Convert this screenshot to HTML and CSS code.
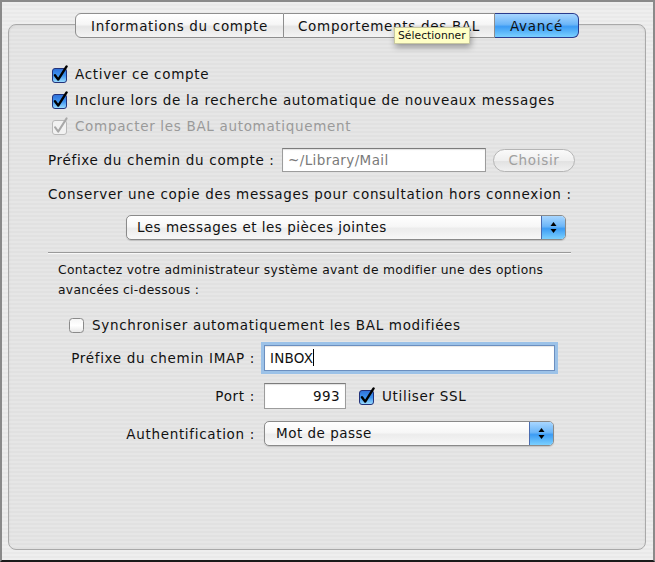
FILE: index.html
```html
<!DOCTYPE html>
<html lang="fr">
<head>
<meta charset="utf-8">
<title>Avancé</title>
<link rel="stylesheet" href="styles.css">
</head>
<body>
<div class="window">
  <div class="tabbox">
    <div class="tabs">
      <div class="tab tab-first">Informations du compte</div>
      <div class="tab tab-mid">Comportements des BAL</div>
      <div class="tab tab-sel">Avancé</div>
    </div>
    <div class="pane">
      <div class="check-row row1">
        <svg class="cb" width="18" height="18" viewBox="0 0 18 18"><defs><linearGradient id="bl" x1="0" y1="0" x2="0" y2="1"><stop offset="0" stop-color="#2f6fd8"/><stop offset="0.5" stop-color="#3d93f0"/><stop offset="1" stop-color="#9fe0ff"/></linearGradient></defs><rect x="1.5" y="3.5" width="14" height="14" rx="2.5" fill="url(#bl)" stroke="#23327a"/><path d="M4 10.2 L7.2 14.6 L15.6 1.4" fill="none" stroke="#000" stroke-width="2.4" stroke-linecap="round" stroke-linejoin="round"/></svg>
        <span>Activer ce compte</span>
      </div>
      <div class="check-row">
        <svg class="cb" width="18" height="18" viewBox="0 0 18 18"><rect x="1.5" y="3.5" width="14" height="14" rx="2.5" fill="url(#bl)" stroke="#23327a"/><path d="M4 10.2 L7.2 14.6 L15.6 1.4" fill="none" stroke="#000" stroke-width="2.4" stroke-linecap="round" stroke-linejoin="round"/></svg>
        <span>Inclure lors de la recherche automatique de nouveaux messages</span>
      </div>
      <div class="check-row disabled">
        <svg class="cb" width="18" height="18" viewBox="0 0 18 18"><rect x="1.5" y="3.5" width="14" height="14" rx="2.5" fill="#f2f2f2" stroke="#b9b9b9"/><path d="M4 10.2 L7.2 14.6 L15.6 1.4" fill="none" stroke="#a8a8a8" stroke-width="2" stroke-linecap="round" stroke-linejoin="round"/></svg>
        <span>Compacter les BAL automatiquement</span>
      </div>
      <div class="path-row">
        <span class="label">Préfixe du chemin du compte :</span>
        <div class="field field-path">~/Library/Mail</div>
        <div class="pill">Choisir</div>
      </div>
      <div class="keep-label">Conserver une copie des messages pour consultation hors connexion :</div>
      <div class="popup popup-keep">
        <span class="popup-text">Les messages et les pièces jointes</span>
        <span class="popup-arrows"><svg width="9" height="13" viewBox="0 0 9 13"><path d="M4.5 1 L7.5 5 L1.5 5 Z M4.5 12 L7.5 8 L1.5 8 Z" fill="#000"/></svg></span>
      </div>
      <div class="sep"></div>
      <p class="note">Contactez votre administrateur système avant de modifier une des options avancées ci-dessous :</p>
      <div class="check-row sync">
        <svg class="cb" width="18" height="18" viewBox="0 0 18 18"><defs><linearGradient id="wh" x1="0" y1="0" x2="0" y2="1"><stop offset="0" stop-color="#f4f4f4"/><stop offset="0.5" stop-color="#ffffff"/><stop offset="1" stop-color="#e6e6e6"/></linearGradient></defs><rect x="1.5" y="2.5" width="14" height="14" rx="3" fill="url(#wh)" stroke="#8a8a8a"/></svg>
        <span>Synchroniser automatiquement les BAL modifiées</span>
      </div>
      <div class="form">
        <span class="flabel">Préfixe du chemin IMAP :</span>
        <div class="field field-imap">INBOX<span class="caret"></span></div>
        <span class="flabel">Port :</span>
        <div class="port-line">
          <div class="field field-port">993</div>
          <svg class="cb" width="18" height="18" viewBox="0 0 18 18"><rect x="1.5" y="3.5" width="14" height="14" rx="2.5" fill="url(#bl)" stroke="#23327a"/><path d="M4 10.2 L7.2 14.6 L15.6 1.4" fill="none" stroke="#000" stroke-width="2.4" stroke-linecap="round" stroke-linejoin="round"/></svg>
          <span>Utiliser SSL</span>
        </div>
        <span class="flabel">Authentification :</span>
        <div class="popup popup-auth">
          <span class="popup-text">Mot de passe</span>
          <span class="popup-arrows"><svg width="9" height="13" viewBox="0 0 9 13"><path d="M4.5 1 L7.5 5 L1.5 5 Z M4.5 12 L7.5 8 L1.5 8 Z" fill="#000"/></svg></span>
        </div>
      </div>
    </div>
  </div>
  <div class="tooltip">Sélectionner</div>
</div>
</body>
</html>
```

FILE: styles.css
```css
* { box-sizing: border-box; }
html, body { margin: 0; padding: 0; }
body {
  font-family: "DejaVu Sans", "Liberation Sans", sans-serif;
  font-size: 13.5px;
  letter-spacing: 0.68px;
  color: #111;
}
.window {
  position: relative;
  width: 655px;
  height: 562px;
  border: 2px solid #8a8a8a;
  border-bottom-color: #1a1a1a;
  background: repeating-linear-gradient(to bottom, #eeeeee 0 2px, #e9e9e9 2px 4px);
  padding: 22px 7px 11px 6px;
}
.tabbox {
  height: 526px;
  border: 1px solid #a9a9a9;
  border-radius: 8px;
  background: repeating-linear-gradient(to bottom, #e6e6e6 0 2px, #e1e1e1 2px 4px);
  box-shadow: inset 0 1px 2px rgba(0,0,0,0.08);
}
.tabs {
  display: flex;
  justify-content: center;
  margin-top: -12px;
  height: 25px;
}
.tab {
  height: 25px;
  line-height: 25px;
  text-align: center;
  border: 1px solid #8e8e8e;
  background: linear-gradient(to bottom, #ffffff 0%, #f6f6f6 45%, #e6e6e6 55%, #f4f4f4 100%);
  color: #111;
  white-space: nowrap;
}
.tab-first { width: 209px; border-radius: 6px 0 0 6px; }
.tab-mid { width: 211px; border-left: 0; }
.tab-sel {
  width: 84px;
  border-left: 0;
  border-color: #2a3c8e;
  border-radius: 0 6px 6px 0;
  background: linear-gradient(to bottom, #a8d6ff 0%, #6cb6f8 45%, #3c9cf4 55%, #7ad0ff 100%);
}
.pane {
  padding: 0 0 0 42px;
  display: flex;
  flex-direction: column;
}
.check-row {
  display: flex;
  align-items: center;
  height: 26px;
  gap: 6px;
  white-space: nowrap;
}
.row1 { margin-top: 23px; }
.cb { flex: none; }
.disabled { color: #9a9a9a; }
.path-row {
  display: flex;
  align-items: center;
  height: 26px;
  margin-top: 8px;
  margin-left: -3px;
}
.label { width: 234px; flex: none; white-space: nowrap; }
.field {
  background: #fff;
  border: 1px solid #9c9c9c;
  border-top-color: #7c7c7c;
  box-shadow: inset 0 1px 1px rgba(0,0,0,0.12);
  height: 24px;
  line-height: 22px;
  padding: 0 5px;
}
.field-path { width: 204px; color: #7a7a7a; letter-spacing: 0.4px; }
.pill {
  margin-left: 7px;
  width: 82px;
  height: 23px;
  line-height: 21px;
  border: 1px solid #b5b5b5;
  border-radius: 12px;
  background: linear-gradient(to bottom, #fafafa 0%, #efefef 50%, #e2e2e2 55%, #f0f0f0 100%);
  color: #a0a0a0;
  text-align: center;
}
.keep-label {
  margin-top: 11px;
  margin-left: -3px;
  height: 20px;
  line-height: 20px;
  white-space: nowrap;
}
.popup {
  display: flex;
  align-items: stretch;
  height: 25px;
  border: 1px solid #8a8a8a;
  border-radius: 5px;
  background: linear-gradient(to bottom, #ffffff 0%, #f7f7f7 45%, #ececec 55%, #f8f8f8 100%);
  box-shadow: 0 1px 1px rgba(0,0,0,0.15);
  overflow: hidden;
}
.popup-keep { margin-top: 11px; margin-left: 75px; width: 440px; }
.popup-text { flex: 1; padding-left: 10px; line-height: 23px; letter-spacing: 0.5px; }
.popup-arrows {
  width: 24px;
  display: flex;
  align-items: center;
  justify-content: center;
  border-left: 1px solid #4a6cb0;
  background: linear-gradient(to bottom, #a8d6ff 0%, #6cb6f8 45%, #3c9cf4 55%, #7ad0ff 100%);
}
.sep {
  margin-top: 12px;
  margin-left: -3px;
  width: 523px;
  height: 2px;
  border-top: 1px solid #9a9a9a;
  border-bottom: 1px solid #f8f8f8;
}
.note {
  margin: 6px 0 0 7px;
  width: 520px;
  font-size: 12.3px;
  letter-spacing: 0.3px;
  line-height: 20px;
}
.sync { margin-top: 13px; margin-left: 17px; height: 24px; }
.form {
  display: grid;
  grid-template-columns: 187px auto;
  column-gap: 9px;
  row-gap: 12px;
  align-items: center;
  margin-top: 8px;
  margin-left: 17px;
}
.flabel { text-align: right; white-space: nowrap; }
.field-imap {
  width: 291px;
  height: 26px;
  line-height: 24px;
  border-color: #6c8fbf;
  box-shadow: 0 0 0 3px #9cc2e8, inset 0 1px 1px rgba(0,0,0,0.1);
  letter-spacing: 0.2px;
}
.caret {
  display: inline-block;
  width: 1px;
  height: 17px;
  background: #000;
  vertical-align: -3px;
}
.port-line { display: flex; align-items: center; gap: 6px; }
.field-port { width: 82px; height: 26px; line-height: 24px; text-align: right; margin-right: 6px; letter-spacing: 0.4px; }
.popup-auth { width: 290px; }
.popup-auth .popup-text { padding-left: 11px; }
.tooltip {
  position: absolute;
  left: 392px;
  top: 25px;
  height: 17px;
  padding: 0 3px;
  background: #ffffc6;
  border: 1px solid #c8c8a0;
  font-size: 10.8px;
  letter-spacing: 0;
  line-height: 15px;
  box-shadow: 1px 3px 6px rgba(0,0,0,0.35);
}
```
